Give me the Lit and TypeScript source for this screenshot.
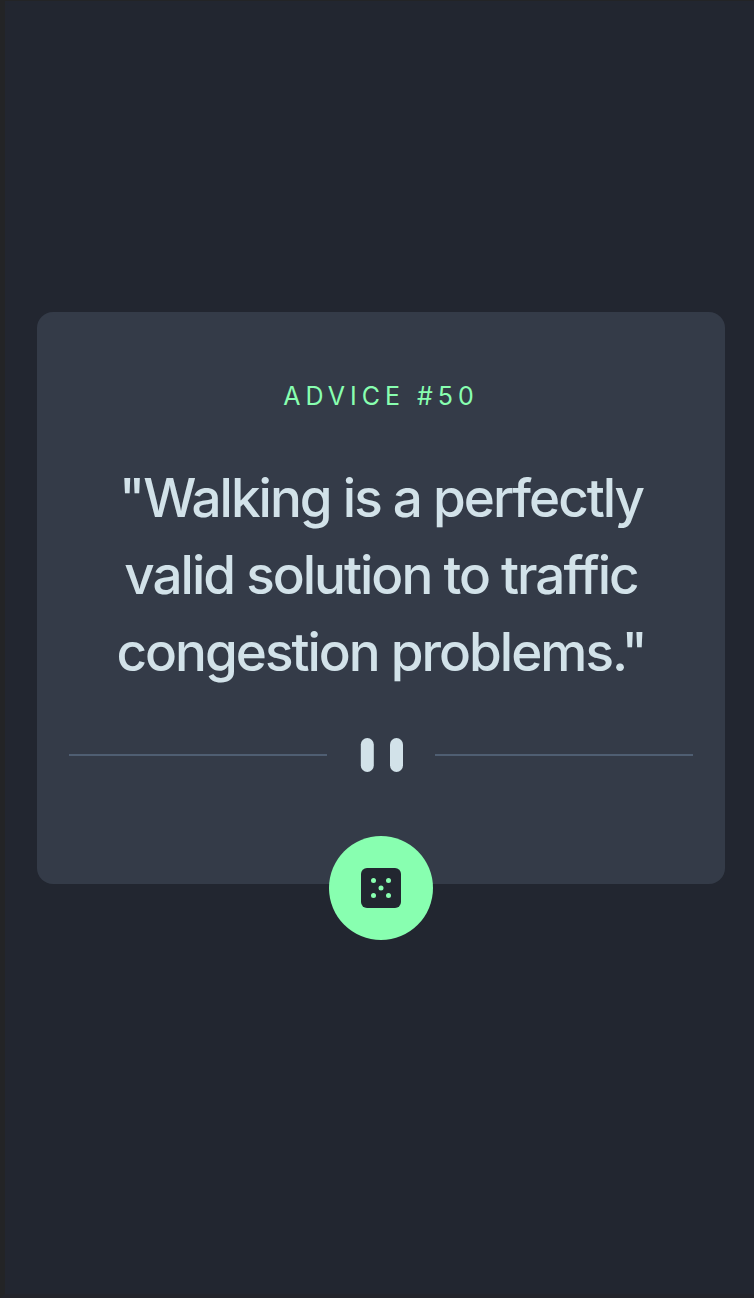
import { LitElement, html, css } from "lit";
import { customElement, state } from "lit/decorators.js";

@customElement("app-root")
export class AppRoot extends LitElement {
  @state() private advice = {
    id: 50,
    text: "Walking is a perfectly valid solution to traffic congestion problems.",
  };

  static styles = css`
    :host {
      display: block;
      background: #222630;
      font-family: "Inter", "Open Sans", sans-serif;
    }
    main {
      box-sizing: border-box;
      min-height: 100vh;
      display: flex;
      flex-direction: column;
      justify-content: center;
      padding: 0 29px 100px 32px;
      border: solid #232426;
      border-width: 1px 0 4px 5px;
      border-bottom-color: #23242b;
    }
    .card {
      display: flex;
      flex-direction: column;
      align-items: center;
      background: #343b48;
      border-radius: 16px;
      padding: 68px 32px 0;
      text-align: center;
    }
    h1 {
      margin: 0;
      font-size: 25px;
      line-height: 32px;
      font-weight: 400;
      letter-spacing: 5px;
      color: #88ffb0;
    }
    .quote {
      margin: 48px 32px 47px;
      font-size: 53px;
      line-height: 77px;
      font-weight: 500;
      letter-spacing: -2px;
      color: #d2e2e9;
    }
    .divider {
      width: 100%;
      display: flex;
      align-items: center;
      gap: 32px;
    }
    .divider::before,
    .divider::after {
      content: "";
      flex: 1;
      height: 2px;
      background: #4f5e72;
    }
    .divider svg {
      display: block;
    }
    button {
      display: grid;
      place-items: center;
      width: 104px;
      height: 104px;
      margin: 64px 0 -56px;
      padding: 0;
      border: 0;
      border-radius: 50%;
      background: #88ffb0;
      cursor: pointer;
    }
  `;

  render() {
    const title = `ADVICE #${this.advice.id}`;
    const quote = `"${this.advice.text}"`;
    return html`
      <main>
        <article class="card">
          <h1>${title}</h1>
          <p class="quote">${quote}</p>
          <div class="divider">
            <svg width="44" height="34" viewBox="0 0 44 34" fill="#d2e2e9" aria-hidden="true">
              <rect x="1.8" width="13" height="34" rx="6.5" />
              <rect x="31" width="13" height="34" rx="6.5" />
            </svg>
          </div>
          <button type="button" aria-label="New advice">
            <svg width="40" height="40" viewBox="0 0 40 40" aria-hidden="true">
              <rect width="40" height="40" rx="6" fill="#222630" />
              <g fill="#88ffb0">
                <circle cx="12.5" cy="12.5" r="2.5" />
                <circle cx="27.5" cy="12.5" r="2.5" />
                <circle cx="20" cy="20" r="2.5" />
                <circle cx="12.5" cy="27.5" r="2.5" />
                <circle cx="27.5" cy="27.5" r="2.5" />
              </g>
            </svg>
          </button>
        </article>
      </main>
    `;
  }
}
